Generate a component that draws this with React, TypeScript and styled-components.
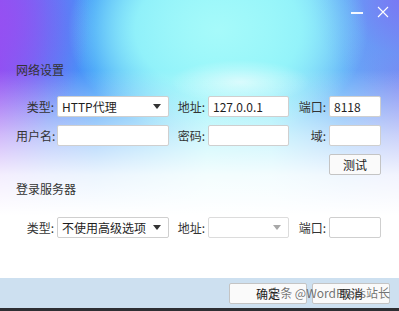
import { FC } from 'react'
import styled, { createGlobalStyle, css } from 'styled-components'

const GlobalStyle = createGlobalStyle`
  html, body {
    margin: 0;
    padding: 0;
  }
  body {
    font-family: "Noto Sans CJK SC", "Noto Sans", sans-serif;
    font-size: 12px;
    color: #333;
  }
`

const Window = styled.div`
  position: relative;
  width: 399px;
  height: 311px;
  overflow: hidden;
  display: flex;
  flex-direction: column;
  background:
    linear-gradient(to bottom, rgba(255, 255, 255, 0) 0px, rgba(255, 255, 255, 0) 70px, rgba(255, 255, 255, 0.6) 135px, rgba(255, 255, 255, 0.9) 175px, #fff 215px),
    radial-gradient(ellipse 70px 22px at 240px 82px, rgba(255, 255, 255, 0.6), rgba(255, 255, 255, 0)),
    radial-gradient(ellipse 150px 110px at 218px 30px, #a6fafa 0%, rgba(150, 246, 250, 0.9) 55%, rgba(150, 246, 250, 0) 100%),
    radial-gradient(ellipse 90px 90px at 400px 0px, rgba(120, 120, 244, 0.95), rgba(100, 150, 246, 0.5) 60%, rgba(100, 150, 246, 0)),
    radial-gradient(ellipse 90px 120px at 0px 20px, rgba(150, 80, 242, 0.9), rgba(150, 80, 242, 0)),
    linear-gradient(90deg, #8c52f2 0%, #5a7ef6 12%, #3f9af8 24%, #62c6f8 38%, #8aeef8 52%, #86e8fa 68%, #62acf8 86%, #7c8cf2 100%);
`

const TitleBar = styled.div`
  height: 58px;
  display: flex;
  justify-content: flex-end;
  align-items: flex-start;
  padding: 5px 9px 0 0;
  gap: 12px;
  box-sizing: border-box;
`

const WinButton = styled.div`
  width: 14px;
  height: 14px;
  display: flex;
  align-items: center;
  justify-content: center;
`

const MinimizeBar = styled.div`
  width: 12px;
  height: 2px;
  background: rgba(255, 255, 255, 0.92);
  margin-top: 2px;
`

const Content = styled.div`
  flex: 1;
  padding-left: 16px;
`

const SectionTitle = styled.div<{ $top: number; $bottom: number }>`
  font-size: 12px;
  line-height: 18px;
  color: #333;
  margin-top: ${({ $top }) => $top}px;
  margin-bottom: ${({ $bottom }) => $bottom}px;
`

const FormGrid = styled.div`
  display: grid;
  grid-template-columns: 41px 112px 39px 81px 40px 52px;
  grid-auto-rows: 21px;
  row-gap: 8px;
  align-items: center;
`

const Label = styled.div`
  text-align: right;
  padding-right: 3px;
  white-space: nowrap;
  line-height: 21px;
  color: #333;
`

const fieldBox = css`
  box-sizing: border-box;
  height: 21px;
  background: #fff;
  border: 1px solid #cfcfcf;
  border-radius: 2px;
  padding: 0 4px;
  display: flex;
  align-items: center;
  font-size: 12px;
  color: #1e1e1e;
`

const Input = styled.div`
  ${fieldBox}
`

const Select = styled.div<{ $disabled?: boolean }>`
  ${fieldBox}
  justify-content: space-between;
  padding-right: 7px;
  border-color: ${({ $disabled }) => ($disabled ? '#dcdcdc' : '#cfcfcf')};
  svg path {
    fill: ${({ $disabled }) => ($disabled ? '#a8a8a8' : '#333')};
  }
`

const Button = styled.div<{ $width: number }>`
  box-sizing: border-box;
  width: ${({ $width }) => $width}px;
  height: 21px;
  background: #fafafa;
  border: 1px solid #c4c4c4;
  border-radius: 2px;
  display: flex;
  align-items: center;
  justify-content: center;
  font-size: 12px;
  color: #222;
`

const TestCell = styled.div`
  grid-column: 6;
  margin-top: -1px;
`

const BottomBar = styled.div`
  position: relative;
  height: 30px;
  background: #cde0f0;
  border-bottom: 3px solid #2e2f33;
  display: flex;
  justify-content: flex-end;
  align-items: center;
  gap: 5px;
  padding-right: 9px;
`

const Watermark = styled.div`
  position: absolute;
  right: 9px;
  top: 8px;
  font-size: 12px;
  line-height: 14px;
  color: rgba(70, 70, 70, 0.75);
  white-space: nowrap;
`

const Arrow: FC = () => (
  <svg width="8" height="5" viewBox="0 0 8 5">
    <path d="M0 0 H8 L4 5 Z" />
  </svg>
)

const App: FC = () => {
  return (
    <>
      <GlobalStyle />
      <Window>
        <TitleBar>
          <WinButton>
            <MinimizeBar />
          </WinButton>
          <WinButton>
            <svg width="12" height="12" viewBox="0 0 12 12">
              <path d="M1 1 L11 11 M11 1 L1 11" stroke="#fff" strokeWidth="1.1" />
            </svg>
          </WinButton>
        </TitleBar>
        <Content>
          <SectionTitle $top={3} $bottom={17}>网络设置</SectionTitle>
          <FormGrid>
            <Label>类型:</Label>
            <Select>
              <span>HTTP代理</span>
              <Arrow />
            </Select>
            <Label>地址:</Label>
            <Input>127.0.0.1</Input>
            <Label>端口:</Label>
            <Input>8118</Input>

            <Label>用户名:</Label>
            <Input />
            <Label>密码:</Label>
            <Input />
            <Label>域:</Label>
            <Input />

            <TestCell>
              <Button $width={52}>测试</Button>
            </TestCell>
          </FormGrid>
          <SectionTitle $top={5} $bottom={19}>登录服务器</SectionTitle>
          <FormGrid>
            <Label>类型:</Label>
            <Select>
              <span>不使用高级选项</span>
              <Arrow />
            </Select>
            <Label>地址:</Label>
            <Select $disabled>
              <span />
              <Arrow />
            </Select>
            <Label>端口:</Label>
            <Input />
          </FormGrid>
        </Content>
        <BottomBar>
          <Button $width={78}>确定</Button>
          <Button $width={78}>取消</Button>
          <Watermark>头条 @WordPress站长</Watermark>
        </BottomBar>
      </Window>
    </>
  )
}

export default App
